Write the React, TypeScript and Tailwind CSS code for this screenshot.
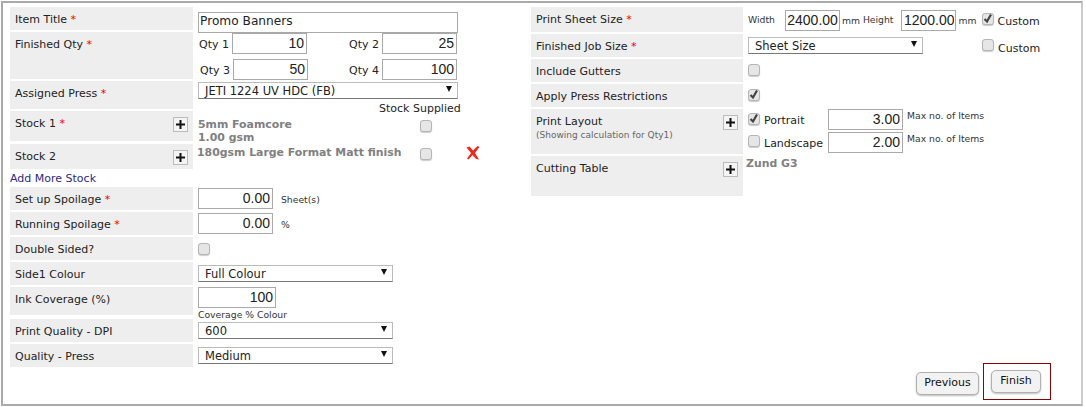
import type { ReactNode } from "react";

const FONT = "font-['DejaVu_Sans',Verdana,sans-serif]";

function Req() {
  return <span className="text-[#f00000]"> *</span>;
}

function Plus() {
  return (
    <span className="flex h-[15px] w-[15px] items-center justify-center border border-[#bbb] bg-[#f4f4f4]">
      <svg width="9" height="9" viewBox="0 0 9 9">
        <path d="M3.5 0h2v3.5H9v2H5.5V9h-2V5.5H0v-2h3.5z" fill="#111" />
      </svg>
    </span>
  );
}

function Check({ checked = false, className = "" }: { checked?: boolean; className?: string }) {
  return (
    <span className={`flex h-[12px] w-[12px] shrink-0 items-center justify-center rounded-[3px] border border-[#b5b5b5] bg-[#e6e6e6] shadow-[0_1px_1px_#ccc] ${className}`}>
      {checked && (
        <svg width="10" height="10" viewBox="0 0 10 10">
          <path d="M1.5 5 L4 7.5 L8 0.5" stroke="#444" strokeWidth="2.2" fill="none" />
        </svg>
      )}
    </span>
  );
}

function Field({ value, className = "" }: { value: string; className?: string }) {
  return (
    <input
      readOnly
      value={value}
      className={`h-[21px] border border-[#a9a9a9] bg-white px-[2px] text-right font-['Liberation_Sans',Arial,sans-serif] text-[14px] text-[#222] outline-none ${className}`}
    />
  );
}

function Dropdown({ value, className = "" }: { value: string; className?: string }) {
  return (
    <div className={`flex h-[17px] items-start justify-between border border-[#bbb] border-b-[#777] bg-white pl-[6px] pr-[5px] text-[11.5px] leading-[15px] text-[#222] ${className}`}>
      <span className="pt-[1px]">{value}</span>
      <span className="mt-[3px] h-0 w-0 border-x-[3px] border-t-[6px] border-x-transparent border-t-[#111]" />
    </div>
  );
}

function Row({ label, h, mb = 2, w = 183, plus, content, contentClass = "" }: {
  label: ReactNode;
  h: number;
  mb?: number;
  w?: number;
  plus?: boolean;
  content?: ReactNode;
  contentClass?: string;
}) {
  return (
    <div className="flex" style={{ height: h, marginBottom: mb }}>
      <div className="flex shrink-0 justify-between bg-[#eeeeee] pl-[5px] pr-[5px] pt-[6px] text-[11px] leading-[13px] text-[#222]" style={{ width: w }}>
        <div>{label}</div>
        {plus && <div><Plus /></div>}
      </div>
      <div className={`relative min-w-0 flex-1 ${contentClass}`}>{content}</div>
    </div>
  );
}

function Small({ children, className = "" }: { children: ReactNode; className?: string }) {
  return <span className={`text-[9.25px] leading-[12px] text-[#333] ${className}`}>{children}</span>;
}

function StockName({ children, className = "" }: { children: ReactNode; className?: string }) {
  return <div className={`text-[10.9px] font-bold leading-[13px] text-[#808080] ${className}`}>{children}</div>;
}

function RedCross() {
  return (
    <svg width="14" height="14" viewBox="0 0 14 14">
      <path d="M0.5 1.5 L3.5 0.5 L7 4.5 L11.5 0 L13.5 1 L9 7 L13 13.5 L10 13 L6.5 9 L2.5 13.5 L1 12.5 L5 7 Z" fill="#ee2a1c" />
    </svg>
  );
}

export default function App() {
  return (
    <div className={`${FONT} h-[407px] w-[1086px] overflow-hidden bg-white pl-px pt-px`}>
      <div className="flex h-[405px] w-[1082px] border-2 border-[#aaaaaa] border-r-[#cccccc] pl-[7px] pt-[4px]">
        {/* left column */}
        <div className="w-[521px] shrink-0">
          <Row
            h={23}
            label={<>Item Title<Req /></>}
            contentClass="pl-[5px] pt-[1px]"
            content={
              <input
                readOnly
                value="Promo Banners"
                className="h-[21px] w-[260px] border border-[#a9a9a9] bg-white px-[1px] pb-[3px] text-[12.2px] leading-[14px] text-[#222] outline-none"
              />
            }
          />
          <Row
            h={47}
            label={<>Finished Qty<Req /></>}
            contentClass="pl-[5px] pt-[1px] text-[11px] text-[#222]"
            content={
              <div className="flex flex-col gap-[5px]">
                <div className="flex h-[21px] items-center">
                  <span className="w-[34px] pl-[1px] pt-[3px]">Qty 1</span>
                  <Field value="10" className="w-[75px]" />
                  <span className="ml-[42px] w-[33px] pt-[3px]">Qty 2</span>
                  <Field value="25" className="w-[75px]" />
                </div>
                <div className="flex h-[21px] items-center">
                  <span className="w-[35px] pl-[2px] pt-[3px]">Qty 3</span>
                  <Field value="50" className="w-[75px]" />
                  <span className="ml-[41px] w-[33px] pt-[3px]">Qty 4</span>
                  <Field value="100" className="w-[75px]" />
                </div>
              </div>
            }
          />
          <Row
            h={28}
            label={<>Assigned Press<Req /></>}
            contentClass="pl-[5px] pt-[1px]"
            content={
              <>
                <Dropdown value="JETI 1224 UV HDC (FB)" className="w-[260px]" />
                <div className="ml-[181px] mt-[3px] whitespace-nowrap text-[11px] leading-[13px] text-[#222]">Stock Supplied</div>
              </>
            }
          />
          <Row
            h={30}
            mb={3}
            plus
            label={<>Stock 1<Req /></>}
            contentClass="pl-[5px] pt-[7px]"
            content={
              <div className="flex">
                <div className="w-[222px]">
                  <StockName>5mm Foamcore</StockName>
                  <StockName>1.00 gsm</StockName>
                </div>
                <Check className="mt-[2px]" />
              </div>
            }
          />
          <Row
            h={25}
            mb={0}
            plus
            label="Stock 2"
            contentClass="pl-[4px] pt-[2px]"
            content={
              <div className="flex">
                <StockName className="w-[223px] whitespace-nowrap">180gsm Large Format Matt finish</StockName>
                <Check className="mt-[2px]" />
                <span className="ml-[34px]"><RedCross /></span>
              </div>
            }
          />
          <div className="h-[18px] pt-[3px] text-[11px] leading-[13px] text-[#2b2b80]">Add More Stock</div>
          <Row
            h={23}
            label={<>Set up Spoilage<Req /></>}
            contentClass="pl-[5px] pt-[1px] flex items-start"
            content={
              <>
                <Field value="0.00" className="w-[75px]" />
                <Small className="ml-[8px] mt-[6px]">Sheet(s)</Small>
              </>
            }
          />
          <Row
            h={23}
            label={<>Running Spoilage<Req /></>}
            contentClass="pl-[5px] pt-[1px] flex items-start"
            content={
              <>
                <Field value="0.00" className="w-[75px]" />
                <Small className="ml-[8px] mt-[6px]">%</Small>
              </>
            }
          />
          <Row h={23} label="Double Sided?" contentClass="pl-[5px] pt-[6px]" content={<Check />} />
          <Row
            h={23}
            label="Side1 Colour"
            contentClass="pl-[5px] pt-[3px]"
            content={<Dropdown value="Full Colour" className="w-[195px]" />}
          />
          <Row
            h={28}
            mb={4}
            label="Ink Coverage (%)"
            contentClass="pl-[5px]"
            content={
              <>
                <Field value="100" className="block w-[78px]" />
                <Small className="block pt-[1px]">Coverage % Colour</Small>
              </>
            }
          />
          <Row
            h={23}
            label="Print Quality - DPI"
            contentClass="pl-[5px] pt-[3px]"
            content={<Dropdown value="600" className="w-[195px]" />}
          />
          <Row
            h={23}
            label="Quality - Press"
            contentClass="pl-[5px] pt-[3px]"
            content={<Dropdown value="Medium" className="w-[195px]" />}
          />
        </div>

        {/* right column */}
        <div className="flex w-[550px] shrink-0 flex-col">
          <Row
            h={25}
            mb={2}
            w={212}
            label={<>Print Sheet Size<Req /></>}
            contentClass="pl-[5px] pt-[3px] flex items-start text-[#333]"
            content={
              <>
                <Small className="mt-[4px]">Width</Small>
                <Field value="2400.00" className="ml-[10px] w-[55px] !px-[1px]" />
                <Small className="ml-[2px] mt-[5px]">mm</Small>
                <Small className="ml-[3px] mt-[4px]">Height</Small>
                <Field value="1200.00" className="ml-[8px] w-[55px] !px-[1px]" />
                <Small className="ml-[2px] mt-[5px]">mm</Small>
                <Check checked className="ml-[5px] mt-[3px]" />
                <span className="ml-[4px] mt-[5px] text-[11px] leading-[13px] text-[#222]">Custom</span>
              </>
            }
          />
          <Row
            h={23}
            w={212}
            label={<>Finished Job Size<Req /></>}
            contentClass="pl-[5px] pt-[3px] flex items-start"
            content={
              <>
                <Dropdown value="Sheet Size" className="w-[175px]" />
                <Check className="ml-[59px] mt-[2px]" />
                <span className="ml-[4px] mt-[5px] text-[11px] leading-[13px] text-[#222]">Custom</span>
              </>
            }
          />
          <Row h={23} w={212} label="Include Gutters" contentClass="pl-[5px] pt-[5px]" content={<Check />} />
          <Row h={23} w={212} label="Apply Press Restrictions" contentClass="pl-[5px] pt-[5px]" content={<Check checked />} />
          <Row
            h={45}
            w={212}
            plus
            label={
              <>
                Print Layout
                <div className="text-[9px] leading-[14px] text-[#666]">(Showing calculation for Qty1)</div>
              </>
            }
            contentClass="pl-[5px] text-[11px] text-[#222]"
            content={
              <div className="flex flex-col gap-[2px]">
                <div className="flex h-[21px] items-start">
                  <Check checked className="mt-[4px]" />
                  <span className="ml-[4px] mt-[5px] w-[64px] leading-[13px]">Portrait</span>
                  <Field value="3.00" className="w-[75px]" />
                  <Small className="ml-[4px] mt-[1px]">Max no. of Items</Small>
                </div>
                <div className="flex h-[21px] items-start">
                  <Check className="mt-[3px]" />
                  <span className="ml-[4px] mt-[5px] w-[64px] leading-[13px]">Landscape</span>
                  <Field value="2.00" className="w-[75px]" />
                  <Small className="ml-[4px] mt-[1px]">Max no. of Items</Small>
                </div>
              </div>
            }
          />
          <Row
            h={40}
            w={212}
            plus
            label="Cutting Table"
            contentClass="pl-[3px] pt-[1px]"
            content={<StockName>Zund G3</StockName>}
          />
          <div className="mb-[4px] mt-auto flex items-end justify-end pr-[30px]">
            <button className="mb-[5px] h-[23px] w-[63px] rounded-[5px] border border-[#b0b0b0] bg-[#f2f2f2] text-[11px] text-[#111] shadow-[0_1px_2px_#bbb]">Previous</button>
            <div className="ml-[4px] flex h-[37px] w-[68px] items-center border border-[#8b0000] pl-[7px]">
              <button className="h-[23px] w-[50px] rounded-[5px] border border-[#b0b0b0] bg-[#f2f2f2] text-[11px] text-[#111] shadow-[0_1px_2px_#bbb]">Finish</button>
            </div>
          </div>
        </div>
      </div>
    </div>
  );
}
